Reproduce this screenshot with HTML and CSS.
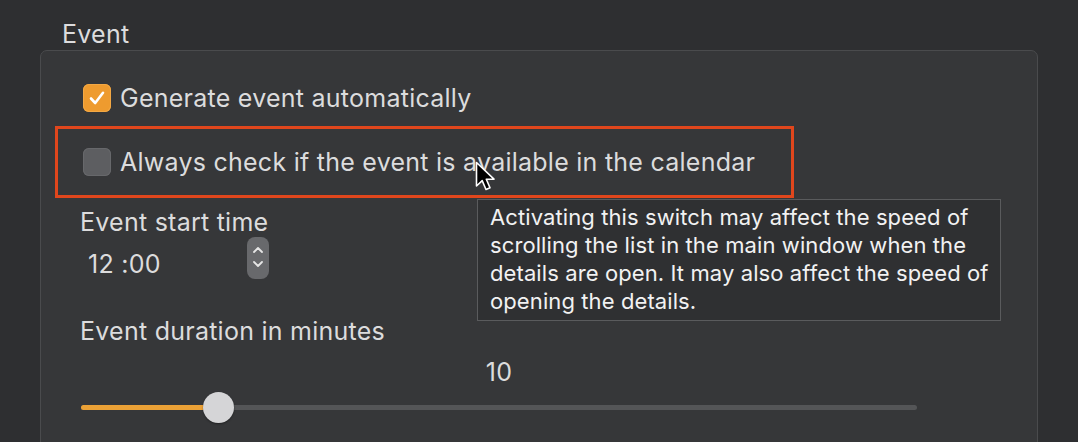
FILE: index.html
```html
<!DOCTYPE html>
<html>
<head>
  <meta charset="UTF-8">
  <title>Event settings</title>
  <link rel="stylesheet" href="styles.css">
</head>
<body>
  <div class="section-title">Event</div>
  <div class="panel">
    <label class="check-row">
      <span class="checkbox checked">
        <svg width="28" height="28" viewBox="0 0 28 28"><path d="M8 14.5 L12.2 19 L20 8.8" fill="none" stroke="#fff" stroke-width="2.6" stroke-linecap="round" stroke-linejoin="round"/></svg>
      </span>
      <span>Generate event automatically</span>
    </label>

    <label class="check-row highlight">
      <span class="checkbox"></span>
      <span>Always check if the event is available in the calendar</span>
    </label>

    <div class="field">
      <div class="field-label">Event start time</div>
      <div class="time-row">
        <span class="time-value">12 :00</span>
        <span class="stepper">
          <svg width="22" height="42" viewBox="0 0 22 42">
            <path d="M7 15 L11 11 L15 15" fill="none" stroke="#e6e6e6" stroke-width="1.8" stroke-linecap="round" stroke-linejoin="round"/>
            <path d="M7 25 L11 29 L15 25" fill="none" stroke="#e6e6e6" stroke-width="1.8" stroke-linecap="round" stroke-linejoin="round"/>
          </svg>
        </span>
      </div>
    </div>

    <div class="field duration">
      <div class="field-label">Event duration in minutes</div>
      <div class="slider">
        <div class="slider-value">10</div>
        <div class="track">
          <div class="track-fill" style="width: 137px"></div>
          <div class="knob" style="left: 122px"></div>
        </div>
      </div>
    </div>
  </div>

  <div class="tooltip">
    <div>Activating this switch may affect the speed of</div>
    <div>scrolling the list in the main window when the</div>
    <div>details are open. It may also affect the speed of</div>
    <div>opening the details.</div>
  </div>

  <svg class="cursor" width="24" height="34" viewBox="0 0 24 34">
    <path d="M1.5 1.5 L1.5 25 L7.2 19.6 L11 28.5 L15 26.8 L11.3 18.2 L19 18.2 Z" fill="#000" stroke="#fff" stroke-width="1.6" stroke-linejoin="round"/>
  </svg>
</body>
</html>
```

FILE: styles.css
```css
body {
  margin: 0;
  width: 1078px;
  height: 442px;
  overflow: hidden;
  position: relative;
  background-color: #2e2f31;
  font-family: 'Inter', 'Liberation Sans', sans-serif;
  font-size: 25px;
  letter-spacing: 0.25px;
  color: #dcdcdd;
}
.section-title {
  padding: 20px 0 0 62px;
  line-height: 28px;
  height: 30px;
}
.panel {
  margin-left: 40px;
  width: 998px;
  height: 420px;
  background-color: #363739;
  border: 1px solid #4a4b4d;
  border-radius: 7px;
  padding-top: 32px;
  box-sizing: border-box;
}
.check-row {
  display: flex;
  align-items: center;
  gap: 9px;
  margin-left: 42px;
  height: 30px;
}
.checkbox {
  width: 28px;
  height: 28px;
  border-radius: 6px;
  background-color: #5d5e61;
  box-shadow: inset 0 0 0 1px #67686b;
  flex-shrink: 0;
}
.checkbox.checked {
  background-color: #ee9b2f;
  box-shadow: inset 0 0 0 1px #f3a844;
}
.checkbox svg {
  display: block;
}
.check-row.highlight {
  width: fit-content;
  margin: 13px 0 0 14px;
  height: 66px;
  padding: 0 36px 0 25px;
  border: 3px solid #e0461c;
}
.field {
  margin-left: 39px;
}
.field-label {
  line-height: 28px;
}
.highlight + .field {
  margin-top: 10px;
}
.time-row {
  display: flex;
  align-items: center;
  margin-top: 1px;
}
.time-value {
  width: 159px;
  padding: 11px 0 0 8px;
}
.stepper {
  width: 22px;
  height: 42px;
  border-radius: 8px;
  background-color: #68696c;
}
.stepper svg {
  display: block;
}
.duration {
  margin-top: 38px;
}
.slider {
  width: 836px;
  margin-left: 1px;
}
.slider-value {
  text-align: center;
  line-height: 28px;
  margin-top: 13px;
}
.track {
  position: relative;
  height: 5px;
  border-radius: 3px;
  background-color: #545557;
  margin-top: 19px;
}
.track-fill {
  height: 5px;
  border-radius: 3px;
  background-color: #eba136;
}
.knob {
  position: absolute;
  top: -13px;
  width: 31px;
  height: 31px;
  border-radius: 50%;
  background-color: #d5d5d7;
  box-shadow: 0 1px 2px rgba(0, 0, 0, 0.4);
}
.tooltip {
  position: absolute;
  left: 477px;
  top: 199px;
  width: 524px;
  height: 122px;
  box-sizing: border-box;
  padding: 3px 0 0 12px;
  background-color: #2f3032;
  border: 1px solid #5a5b5d;
  color: #f2f2f2;
  font-size: 22px;
  letter-spacing: 0.1px;
  line-height: 28px;
  white-space: nowrap;
}
.cursor {
  position: absolute;
  left: 475px;
  top: 161px;
}
```
